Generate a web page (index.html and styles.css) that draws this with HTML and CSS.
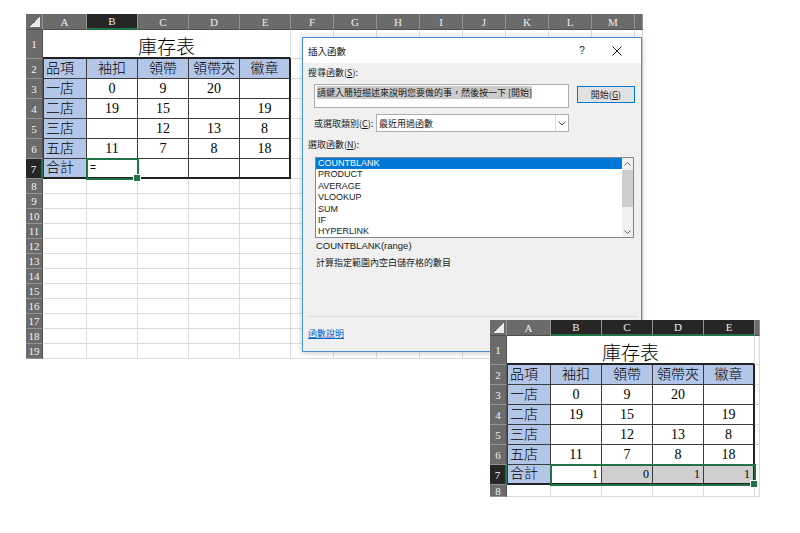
FILE: index.html
```html
<!DOCTYPE html>
<html lang="zh-Hant">
<head>
<meta charset="utf-8">
<title>插入函數</title>
<link rel="stylesheet" href="styles.css">
</head>
<body>
<div class="sheet sheet-main">
  <div class="ch corner"></div><div class="ch">A</div><div class="ch sel">B</div><div class="ch">C</div><div class="ch">D</div><div class="ch">E</div><div class="ch">F</div><div class="ch">G</div><div class="ch">H</div><div class="ch">I</div><div class="ch">J</div><div class="ch">K</div><div class="ch">L</div><div class="ch">M</div><div class="ch"></div>
  <div class="rh">1</div><div class="title">庫存表</div><div class="c"></div><div class="c"></div><div class="c"></div><div class="c"></div><div class="c"></div><div class="c"></div><div class="c"></div><div class="c"></div><div class="c"></div>
  <div class="rh">2</div><div class="t hd lead">品項</div><div class="t hd">袖扣</div><div class="t hd">領帶</div><div class="t hd">領帶夾</div><div class="t hd last">徽章</div><div class="c"></div><div class="c"></div><div class="c"></div><div class="c"></div><div class="c"></div><div class="c"></div><div class="c"></div><div class="c"></div><div class="c"></div>
  <div class="rh">3</div><div class="t hd lead">一店</div><div class="t">0</div><div class="t">9</div><div class="t">20</div><div class="t last"></div><div class="c"></div><div class="c"></div><div class="c"></div><div class="c"></div><div class="c"></div><div class="c"></div><div class="c"></div><div class="c"></div><div class="c"></div>
  <div class="rh">4</div><div class="t hd lead">二店</div><div class="t">19</div><div class="t">15</div><div class="t"></div><div class="t last">19</div><div class="c"></div><div class="c"></div><div class="c"></div><div class="c"></div><div class="c"></div><div class="c"></div><div class="c"></div><div class="c"></div><div class="c"></div>
  <div class="rh">5</div><div class="t hd lead">三店</div><div class="t"></div><div class="t">12</div><div class="t">13</div><div class="t last">8</div><div class="c"></div><div class="c"></div><div class="c"></div><div class="c"></div><div class="c"></div><div class="c"></div><div class="c"></div><div class="c"></div><div class="c"></div>
  <div class="rh">6</div><div class="t hd lead">五店</div><div class="t">11</div><div class="t">7</div><div class="t">8</div><div class="t last">18</div><div class="c"></div><div class="c"></div><div class="c"></div><div class="c"></div><div class="c"></div><div class="c"></div><div class="c"></div><div class="c"></div><div class="c"></div>
  <div class="rh sel">7</div><div class="t hd lead bot">合計</div><div class="t bot formula">=</div><div class="t bot"></div><div class="t bot"></div><div class="t bot last"></div><div class="c"></div><div class="c"></div><div class="c"></div><div class="c"></div><div class="c"></div><div class="c"></div><div class="c"></div><div class="c"></div><div class="c"></div>
  <div class="rh">8</div><div class="c"></div><div class="c"></div><div class="c"></div><div class="c"></div><div class="c"></div><div class="c"></div><div class="c"></div><div class="c"></div><div class="c"></div><div class="c"></div><div class="c"></div><div class="c"></div><div class="c"></div><div class="c"></div>
  <div class="rh">9</div><div class="c"></div><div class="c"></div><div class="c"></div><div class="c"></div><div class="c"></div><div class="c"></div><div class="c"></div><div class="c"></div><div class="c"></div><div class="c"></div><div class="c"></div><div class="c"></div><div class="c"></div><div class="c"></div>
  <div class="rh">10</div><div class="c"></div><div class="c"></div><div class="c"></div><div class="c"></div><div class="c"></div><div class="c"></div><div class="c"></div><div class="c"></div><div class="c"></div><div class="c"></div><div class="c"></div><div class="c"></div><div class="c"></div><div class="c"></div>
  <div class="rh">11</div><div class="c"></div><div class="c"></div><div class="c"></div><div class="c"></div><div class="c"></div><div class="c"></div><div class="c"></div><div class="c"></div><div class="c"></div><div class="c"></div><div class="c"></div><div class="c"></div><div class="c"></div><div class="c"></div>
  <div class="rh">12</div><div class="c"></div><div class="c"></div><div class="c"></div><div class="c"></div><div class="c"></div><div class="c"></div><div class="c"></div><div class="c"></div><div class="c"></div><div class="c"></div><div class="c"></div><div class="c"></div><div class="c"></div><div class="c"></div>
  <div class="rh">13</div><div class="c"></div><div class="c"></div><div class="c"></div><div class="c"></div><div class="c"></div><div class="c"></div><div class="c"></div><div class="c"></div><div class="c"></div><div class="c"></div><div class="c"></div><div class="c"></div><div class="c"></div><div class="c"></div>
  <div class="rh">14</div><div class="c"></div><div class="c"></div><div class="c"></div><div class="c"></div><div class="c"></div><div class="c"></div><div class="c"></div><div class="c"></div><div class="c"></div><div class="c"></div><div class="c"></div><div class="c"></div><div class="c"></div><div class="c"></div>
  <div class="rh">15</div><div class="c"></div><div class="c"></div><div class="c"></div><div class="c"></div><div class="c"></div><div class="c"></div><div class="c"></div><div class="c"></div><div class="c"></div><div class="c"></div><div class="c"></div><div class="c"></div><div class="c"></div><div class="c"></div>
  <div class="rh">16</div><div class="c"></div><div class="c"></div><div class="c"></div><div class="c"></div><div class="c"></div><div class="c"></div><div class="c"></div><div class="c"></div><div class="c"></div><div class="c"></div><div class="c"></div><div class="c"></div><div class="c"></div><div class="c"></div>
  <div class="rh">17</div><div class="c"></div><div class="c"></div><div class="c"></div><div class="c"></div><div class="c"></div><div class="c"></div><div class="c"></div><div class="c"></div><div class="c"></div><div class="c"></div><div class="c"></div><div class="c"></div><div class="c"></div><div class="c"></div>
  <div class="rh">18</div><div class="c"></div><div class="c"></div><div class="c"></div><div class="c"></div><div class="c"></div><div class="c"></div><div class="c"></div><div class="c"></div><div class="c"></div><div class="c"></div><div class="c"></div><div class="c"></div><div class="c"></div><div class="c"></div>
  <div class="rh">19</div><div class="c"></div><div class="c"></div><div class="c"></div><div class="c"></div><div class="c"></div><div class="c"></div><div class="c"></div><div class="c"></div><div class="c"></div><div class="c"></div><div class="c"></div><div class="c"></div><div class="c"></div><div class="c"></div>
  <div class="frame frame-b7"></div>
</div>

<div class="dialog">
  <div class="dlg-title">
    <span class="dlg-name">插入函數</span>
    <span class="dlg-help">?</span>
    <svg class="dlg-close" width="10" height="10" viewBox="0 0 10 10"><path d="M0.5 0.5L9.5 9.5M9.5 0.5L0.5 9.5" stroke="#1a1a1a" stroke-width="1" fill="none"/></svg>
  </div>
  <div class="dlg-body">
    <div class="lbl">搜尋函數(<u>S</u>):</div>
    <div class="search-row">
      <div class="search"><span class="hl">請鍵入簡短描述來說明您要做的事，然後按一下 [開始]</span></div>
      <div class="go">開始(<u>G</u>)</div>
    </div>
    <div class="cat-row">
      <span class="cat-lbl">或選取類別(<u>C</u>):</span>
      <div class="select">
        <span class="select-val">最近用過函數</span>
        <span class="select-arrow"><svg width="8" height="5" viewBox="0 0 8 5"><path d="M0.5 0.5L4 4L7.5 0.5" stroke="#444" fill="none"/></svg></span>
      </div>
    </div>
    <div class="lbl lbl-fn">選取函數(<u>N</u>):</div>
    <div class="list">
      <div class="items">
        <div class="item on">COUNTBLANK</div>
        <div class="item">PRODUCT</div>
        <div class="item">AVERAGE</div>
        <div class="item">VLOOKUP</div>
        <div class="item">SUM</div>
        <div class="item">IF</div>
        <div class="item">HYPERLINK</div>
      </div>
      <div class="sb">
        <svg class="sb-arrow" width="7" height="4" viewBox="0 0 7 4"><path d="M0.5 3.5L3.5 0.5L6.5 3.5" stroke="#606060" fill="none"/></svg>
        <div class="sb-track"><div class="sb-thumb"></div></div>
        <svg class="sb-arrow" width="7" height="4" viewBox="0 0 7 4"><path d="M0.5 0.5L3.5 3.5L6.5 0.5" stroke="#606060" fill="none"/></svg>
      </div>
    </div>
    <div class="desc">
      <div class="sig">COUNTBLANK(range)</div>
      <div class="expl">計算指定範圍內空白儲存格的數目</div>
    </div>
    <div class="sep"></div>
    <a class="help-link">函數說明</a>
  </div>
</div>

<div class="sheet sheet-small">
  <div class="ch corner"></div><div class="ch">A</div><div class="ch sel">B</div><div class="ch sel">C</div><div class="ch sel">D</div><div class="ch sel">E</div><div class="ch"></div>
  <div class="rh">1</div><div class="title">庫存表</div><div class="c"></div>
  <div class="rh">2</div><div class="t hd lead">品項</div><div class="t hd">袖扣</div><div class="t hd">領帶</div><div class="t hd">領帶夾</div><div class="t hd last">徽章</div><div class="c"></div>
  <div class="rh">3</div><div class="t hd lead">一店</div><div class="t">0</div><div class="t">9</div><div class="t">20</div><div class="t last"></div><div class="c"></div>
  <div class="rh">4</div><div class="t hd lead">二店</div><div class="t">19</div><div class="t">15</div><div class="t"></div><div class="t last">19</div><div class="c"></div>
  <div class="rh">5</div><div class="t hd lead">三店</div><div class="t"></div><div class="t">12</div><div class="t">13</div><div class="t last">8</div><div class="c"></div>
  <div class="rh">6</div><div class="t hd lead">五店</div><div class="t">11</div><div class="t">7</div><div class="t">8</div><div class="t last">18</div><div class="c"></div>
  <div class="rh sel">7</div><div class="t hd lead bot">合計</div><div class="t bot num">1</div><div class="t bot num grey">0</div><div class="t bot num grey">1</div><div class="t bot num grey last">1</div><div class="c"></div>
  <div class="rh">8</div><div class="c"></div><div class="c"></div><div class="c"></div><div class="c"></div><div class="c"></div><div class="c"></div>
  <div class="frame frame-sum"></div>
</div>
</body>
</html>
```
FILE: styles.css
```css
* { box-sizing: border-box; }
html, body { margin: 0; padding: 0; }
body {
  width: 800px;
  height: 533px;
  background: #ffffff;
  position: relative;
  overflow: hidden;
  font-family: "Liberation Serif", "Noto Sans CJK TC", serif;
  color: #000;
}

/* ---------- spreadsheet ---------- */
.sheet {
  display: grid;
  position: relative;
  background: #fff;
  overflow: hidden;
}
.sheet-main {
  margin: 14px 0 0 26px;
  width: 617px;
  grid-template-columns: 17px 44px repeat(4, 51px) repeat(8, 43px) 8px;
  grid-template-rows: 16px 29px repeat(6, 20px) repeat(12, 15px);
}
.sheet-small {
  position: absolute;
  left: 490px;
  top: 320px;
  width: 270px;
  height: 177px;
  grid-template-columns: 17px 44px repeat(4, 51px) 5px;
  grid-template-rows: 16px 29px repeat(6, 20px) 12px;
}

.ch {
  background: #6b6b6b;
  color: #ededed;
  font-size: 11px;
  display: flex;
  align-items: center;
  justify-content: center;
  border-right: 1px solid #929292;
  border-bottom: 1px solid #4f4f4f;
}
.ch.sel {
  background: #262626;
  border-bottom: 2px solid #217346;
}
.corner {
  background: linear-gradient(to top left, #ececec 0 50%, transparent 50%) no-repeat right 2px bottom 2px / 10px 10px, #6b6b6b;
}

.rh {
  background: #6b6b6b;
  color: #f2f2f2;
  font-size: 11px;
  display: flex;
  align-items: center;
  justify-content: center;
  border-bottom: 1px solid #939393;
  border-right: 1px solid #4f4f4f;
}
.rh.sel {
  background: #262626;
  border-right: 2px solid #217346;
}

.c {
  border-right: 1px solid #dcdcdc;
  border-bottom: 1px solid #dcdcdc;
}

.title {
  grid-column: span 5;
  font-size: 19px;
  font-weight: 300;
  display: flex;
  align-items: center;
  justify-content: center;
  padding-top: 3px;
  border-bottom: 2px solid #222;
  border-right: 1px solid #dcdcdc;
}

.t {
  border-right: 1px solid #3c3c3c;
  border-bottom: 1px solid #3c3c3c;
  font-size: 14px;
  font-weight: 300;
  display: flex;
  align-items: center;
  justify-content: center;
  line-height: 1;
  white-space: nowrap;
}
.t.hd { background: #b4c6e7; }
.t.lead {
  justify-content: flex-start;
  padding-left: 2px;
  border-left: 1px solid #3c3c3c;
}
.t.last { border-right: 2px solid #222; }
.t.bot { border-bottom: 2px solid #222; }
.t.formula {
  justify-content: flex-start;
  padding-left: 3px;
  font-family: "Liberation Sans", sans-serif;
  font-size: 10px;
}
.t.num {
  justify-content: flex-end;
  padding-right: 3px;
  font-size: 12px;
}
.t.grey { background: #cfcfcf; }

.frame {
  position: absolute;
  inset: -1px;
  border: 2px solid #217346;
  pointer-events: none;
}
.frame::after {
  content: "";
  position: absolute;
  right: -4px;
  bottom: -4px;
  width: 6px;
  height: 6px;
  background: #217346;
  border: 1px solid #fff;
}
.frame-b7 { grid-column: 3 / 4; grid-row: 8 / 9; }
.frame-sum { grid-column: 3 / 7; grid-row: 8 / 9; }

/* ---------- dialog ---------- */
.dialog {
  position: absolute;
  left: 302px;
  top: 37px;
  width: 340px;
  height: 315px;
  background: #f0f0f0;
  border: 1px solid #4a90d9;
  box-shadow: 0 1px 6px rgba(0, 0, 0, 0.22);
  display: flex;
  flex-direction: column;
  font-family: "Noto Sans CJK TC", "Liberation Sans", sans-serif;
  font-size: 9px;
  color: #1a1a1a;
}
.dlg-title {
  height: 25px;
  background: #ffffff;
  display: flex;
  align-items: center;
  padding-left: 5px;
  font-size: 9.5px;
}
.dlg-name { flex: 1; }
.dlg-help {
  width: 10px;
  margin-right: 25px;
  font-family: "Liberation Sans", sans-serif;
  font-size: 10px;
  text-align: center;
}
.dlg-close { margin-right: 19px; }

.dlg-body {
  flex: 1;
  display: flex;
  flex-direction: column;
  padding: 4px 3px 11px 5px;
}
.lbl { line-height: 12px; height: 12px; }
u { text-decoration: underline; text-underline-offset: 1px; }

.search-row {
  display: flex;
  align-items: flex-start;
  margin-top: 5px;
  margin-left: 6px;
}
.search {
  width: 255px;
  height: 24px;
  background: #fff;
  border: 1px solid #abadb3;
  padding: 2px 0 0 2px;
  line-height: 12px;
  white-space: nowrap;
}
.hl { background: #cccccc; }
.go {
  margin-left: 8px;
  margin-top: 2px;
  width: 58px;
  height: 17px;
  background: #e1e1e1;
  border: 1px solid #0078d7;
  box-shadow: inset 0 0 0 1px #e1e1e1;
  display: flex;
  align-items: center;
  justify-content: center;
}

.cat-row {
  display: flex;
  align-items: center;
  margin-top: 6px;
  margin-left: 6px;
}
.cat-lbl { width: 62px; white-space: nowrap; }
.select {
  width: 193px;
  height: 18px;
  background: #fff;
  border: 1px solid #abadb3;
  display: flex;
  align-items: center;
}
.select-val { flex: 1; padding-left: 2px; }
.select-arrow {
  width: 13px;
  height: 100%;
  border-left: 1px solid #dadada;
  display: flex;
  align-items: center;
  justify-content: center;
}

.lbl-fn { margin-top: 7px; }

.list {
  margin-top: 6px;
  margin-left: 7px;
  width: 319px;
  height: 81px;
  background: #fff;
  border: 1px solid #828790;
  display: flex;
}
.items {
  flex: 1;
  font-family: "Liberation Sans", sans-serif;
  font-size: 9px;
}
.item {
  height: 11.4px;
  line-height: 11.4px;
  padding-left: 2px;
}
.item.on { background: #0078d7; color: #fff; }
.sb {
  width: 11px;
  background: #f0f0f0;
  display: flex;
  flex-direction: column;
  align-items: center;
  padding: 4px 0 3px;
}
.sb-track {
  flex: 1;
  width: 100%;
  padding: 4px 0;
}
.sb-thumb {
  width: 100%;
  height: 37px;
  background: #cdcdcd;
}

.desc {
  margin-top: 1px;
  margin-left: 8px;
}
.sig {
  font-family: "Liberation Sans", sans-serif;
  font-size: 9.5px;
  line-height: 14px;
}
.expl { margin-top: 3px; line-height: 14px; }

.sep {
  margin-top: auto;
  height: 1px;
  background: #dcdcdc;
}
.help-link {
  margin-top: 11px;
  line-height: 12px;
  color: #0066cc;
  text-decoration: underline;
  text-underline-offset: 1px;
  align-self: flex-start;
}
```
